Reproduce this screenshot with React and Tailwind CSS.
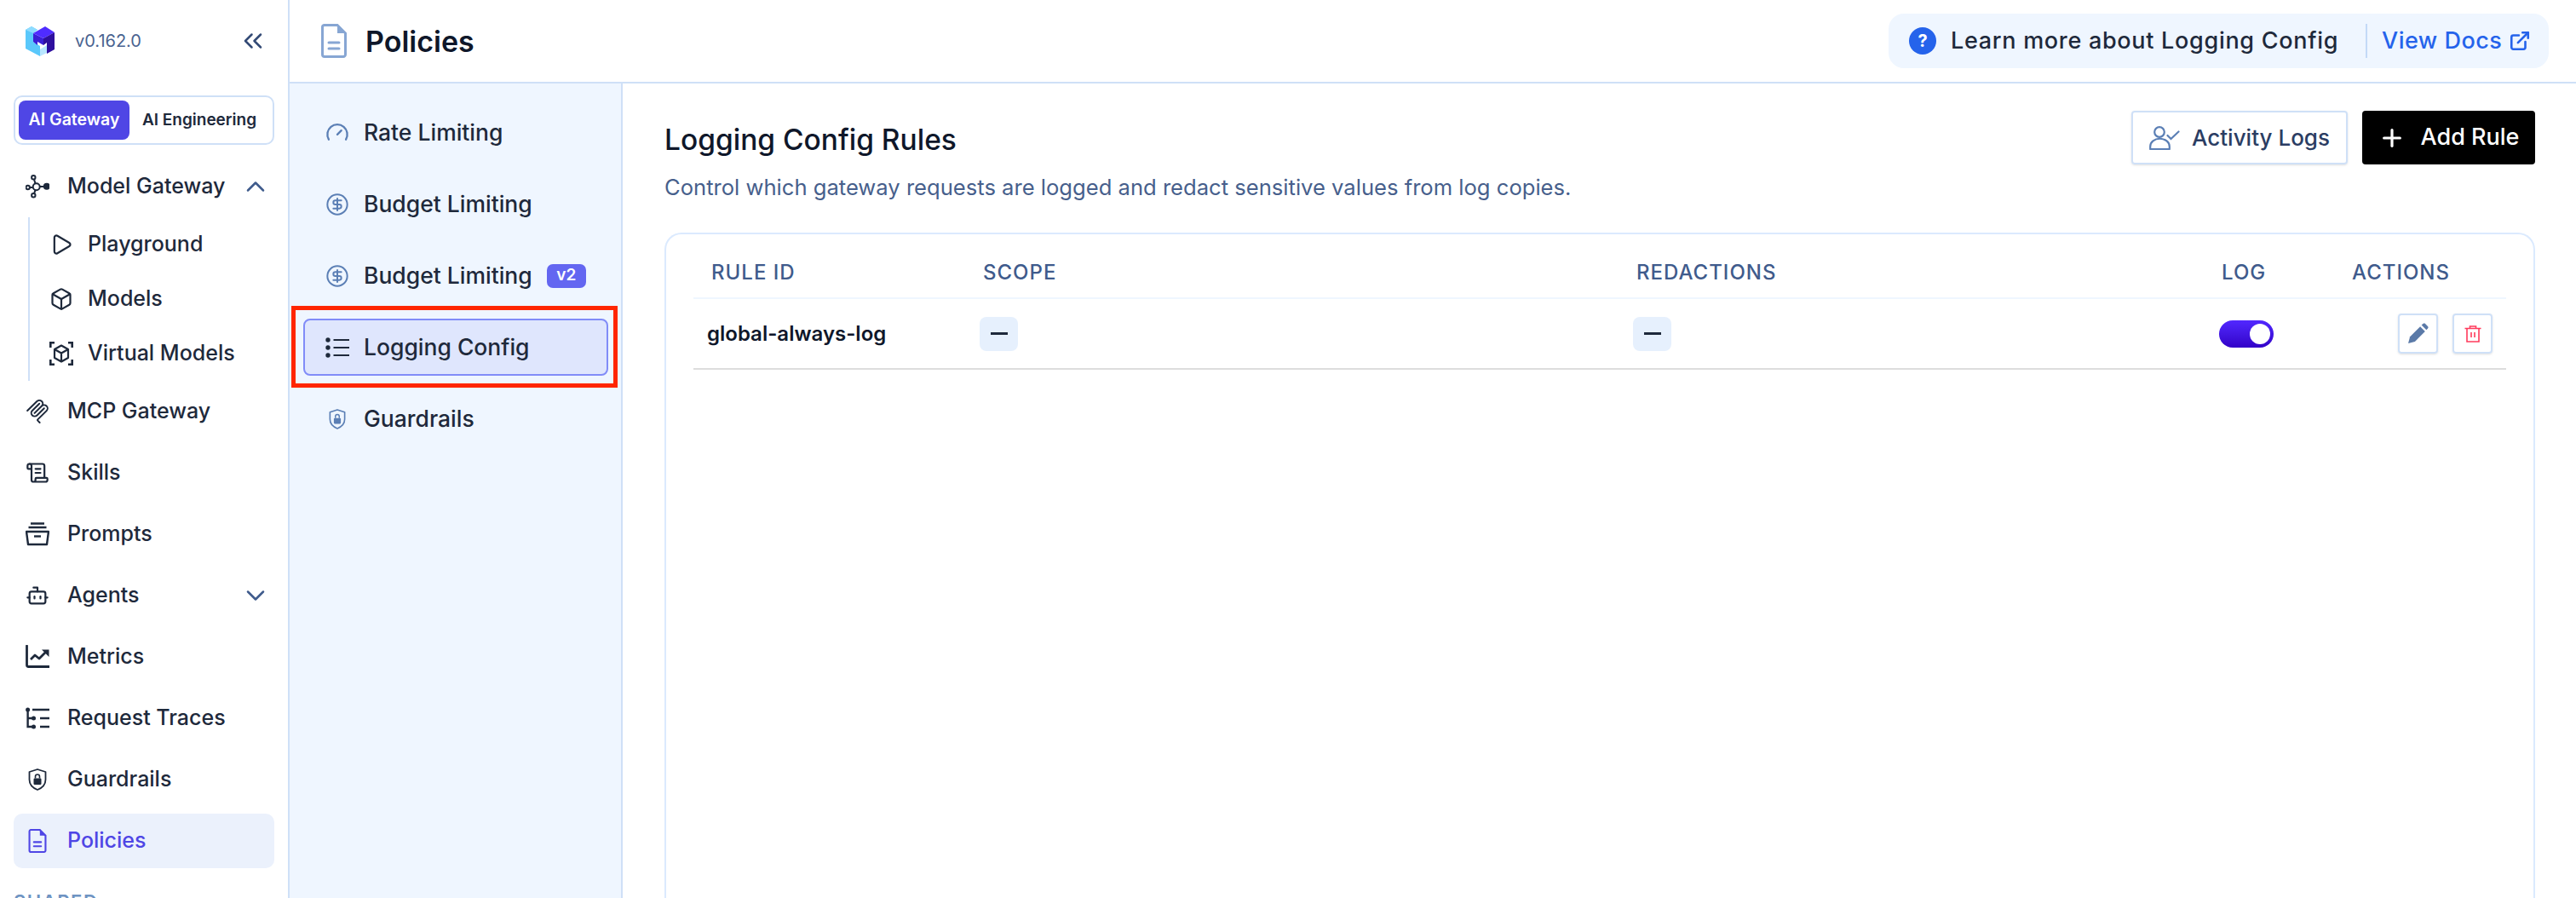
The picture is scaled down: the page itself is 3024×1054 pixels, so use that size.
import {
  ChevronsLeft,
  ChevronUp,
  ChevronDown,
  Play,
  Box,
  ScrollText,
  Bot,
  Gauge,
  CircleDollarSign,
  Plus,
  ExternalLink,
} from "lucide-react";

function Logo() {
  return (
    <svg viewBox="0 0 36 36" className="h-[36px] w-[36px]">
      <path d="M0 5 L7 1 L14 5 L9 9 V19 L17 24 V36 L0 27 Z" fill="#5ac8fb" />
      <path d="M0 5 L7 1 L14 5 L9 9 Z" fill="#8fdcff" />
      <path d="M17 36 L25 32 V23 L17 28 Z" fill="#b8e6ff" />
      <path d="M9 9 L21 15 V23 L14 19 V23 L9 19 Z" fill="#3a1fd6" />
      <path d="M9 9 L23 1 L34 8 L21 15 Z" fill="#4f2cff" />
      <path d="M21 15 L34 8 V28 L25 33 V20 L21 23 Z" fill="#2e0f9e" />
    </svg>
  );
}

function NetworkIcon() {
  return (
    <svg viewBox="0 0 28 28" fill="none" stroke="currentColor" strokeWidth="2" className="h-[28px] w-[28px]">
      <circle cx="12.7" cy="14.3" r="4" />
      <circle cx="9.3" cy="3.3" r="2.2" />
      <circle cx="9.3" cy="24.3" r="2.2" />
      <circle cx="2.7" cy="15" r="2.2" />
      <circle cx="24.8" cy="13.8" r="3" fill="currentColor" />
      <path d="M10 5.5 L11.5 10.4 M10 22.1 L11.5 18.2 M5 15 H8.7 M16.7 14 H22" />
    </svg>
  );
}

function VirtualBoxIcon() {
  return (
    <svg viewBox="0 0 28 28" fill="none" stroke="currentColor" strokeWidth="2.6" className="h-[28px] w-[28px]">
      <path d="M1.3 7 V1.3 H6 M22 1.3 H26.7 V7 M1.3 21 V26.7 H6 M22 26.7 H26.7 V21" />
      <path d="M14 4.5 L22 9 V19 L14 23.5 L6 19 V9 Z M6 9 L14 13.5 L22 9 M14 13.5 V23.5" strokeWidth="2.2" strokeLinejoin="round" />
    </svg>
  );
}

function McpIcon() {
  return (
    <svg viewBox="0 0 24 24" fill="currentColor" className="h-[28px] w-[28px]">
      <path d="M15.688 2.343a2.588 2.588 0 00-3.61 0l-9.626 9.44a.863.863 0 01-1.203 0 .823.823 0 010-1.18l9.626-9.44a4.313 4.313 0 016.016 0 4.116 4.116 0 011.204 3.54 4.3 4.3 0 013.609 1.18l.05.05a4.115 4.115 0 010 5.9l-8.706 8.537a.274.274 0 000 .393l1.788 1.754a.823.823 0 010 1.18.863.863 0 01-1.203 0l-1.788-1.753a1.92 1.92 0 010-2.754l8.706-8.538a2.47 2.47 0 000-3.54l-.05-.049a2.588 2.588 0 00-3.607-.003l-7.172 7.034-.002.002-.098.097a.863.863 0 01-1.204 0 .823.823 0 010-1.18l7.273-7.133a2.47 2.47 0 00-.003-3.537z" />
      <path d="M14.485 4.703a.823.823 0 000-1.18.863.863 0 00-1.204 0l-7.119 6.982a4.115 4.115 0 000 5.9 4.314 4.314 0 006.016 0l7.12-6.982a.823.823 0 000-1.18.863.863 0 00-1.204 0l-7.119 6.982a2.588 2.588 0 01-3.61 0 2.47 2.47 0 010-3.54l7.12-6.982z" />
    </svg>
  );
}

function ArchiveIcon() {
  return (
    <svg viewBox="0 0 28 28" fill="none" stroke="currentColor" strokeWidth="2.4" className="h-[28px] w-[28px]">
      <path d="M6 1.5 H22 M3.5 6 H24.5" />
      <path d="M1 11 H27 L25 26 H3 Z" strokeLinejoin="round" />
      <path d="M10 16.5 H18" />
    </svg>
  );
}

function MetricsIcon() {
  return (
    <svg viewBox="0 0 28 28" fill="none" stroke="currentColor" strokeWidth="2.8" className="h-[28px] w-[28px]">
      <path d="M1.5 1 V23.5 A2 2 0 0 0 3.5 25.5 H28" strokeLinecap="round" />
      <path d="M6 17 L11 12 L16 16 L24 8" strokeLinejoin="round" />
      <path d="M19 5.5 H27.5 V14 Z" fill="currentColor" stroke="none" />
    </svg>
  );
}

function TracesIcon() {
  return (
    <svg viewBox="0 0 28 28" fill="none" stroke="currentColor" strokeWidth="2.4" className="h-[28px] w-[28px]">
      <circle cx="2.6" cy="4" r="2.5" fill="currentColor" stroke="none" />
      <circle cx="9.5" cy="14" r="2.5" fill="currentColor" stroke="none" />
      <circle cx="9.5" cy="24" r="2.5" fill="currentColor" stroke="none" />
      <path d="M2.6 4 V24 H9 M2.6 14 H9 M8 4 H28 M17 14 H28 M17 24 H28" />
    </svg>
  );
}

function ShieldLockIcon({ size = "h-[26px] w-[22px]" }) {
  return (
    <svg viewBox="0 0 22 26" fill="none" className={size}>
      <path d="M11 1 L20.5 4 V13 C20.5 19 16 23 11 25 C6 23 1.5 19 1.5 13 V4 Z" stroke="currentColor" strokeWidth="1.8" strokeLinejoin="round" />
      <rect x="6.5" y="11.5" width="9" height="7.5" rx="1.2" fill="currentColor" />
      <path d="M8.5 11.5 V9.5 A2.5 2.5 0 0 1 13.5 9.5 V11.5" stroke="currentColor" strokeWidth="1.6" />
    </svg>
  );
}

function DocIcon({ className }) {
  return (
    <svg viewBox="0 0 30 40" fill="none" className={className}>
      <path d="M3.5 1.5 H19 L28.5 11 V36 A2.5 2.5 0 0 1 26 38.5 H4 A2.5 2.5 0 0 1 1.5 36 V4 A2.5 2.5 0 0 1 3.5 1.5 Z" stroke="currentColor" strokeWidth="3" />
      <path d="M19 1.5 L28.5 11 H19 Z" fill="currentColor" />
      <path d="M9 22 H21 M9 29 H21" stroke="currentColor" strokeWidth="3" strokeLinecap="round" />
    </svg>
  );
}

function DottedListIcon() {
  return (
    <svg viewBox="0 0 28 24" fill="none" stroke="#1e293b" strokeWidth="2.2" className="h-[24px] w-[28px]">
      <circle cx="3" cy="3" r="2.7" fill="#1e293b" stroke="none" />
      <circle cx="3" cy="12" r="2.7" fill="#1e293b" stroke="none" />
      <circle cx="3" cy="21" r="2.7" fill="#1e293b" stroke="none" />
      <path d="M9.5 3 H28 M9.5 12 H28 M9.5 21 H28" />
    </svg>
  );
}

function ActivityUserIcon() {
  return (
    <svg viewBox="0 0 36 28" fill="none" stroke="#5b7fb5" strokeWidth="2.2" className="h-[28px] w-[36px]">
      <circle cx="12" cy="7" r="5.8" />
      <path d="M1.2 27 V24 A11 9 0 0 1 23.8 24 V27 Z" strokeLinejoin="round" />
      <path d="M21.5 11 L25.5 15 L34.5 6.5" strokeLinecap="round" />
    </svg>
  );
}

function PencilIcon() {
  return (
    <svg viewBox="0 0 24 24" fill="#5b7aa8" className="h-[25px] w-[25px]">
      <path d="M1 23 L3 15.5 L14.5 4 L20 9.5 L8.5 21 Z" />
      <path d="M16 2.5 L18 0.8 C18.6 0.3 19.4 0.3 20 0.8 L23.2 4 C23.7 4.6 23.7 5.4 23.2 6 L21.5 8 Z" />
    </svg>
  );
}

function TrashIcon() {
  return (
    <svg viewBox="0 0 20 20" fill="none" stroke="#ff3b5c" strokeWidth="1.6" className="h-[20px] w-[20px]">
      <path d="M0.5 3.5 H19.5 M6.5 3.5 V1 H13.5 V3.5" />
      <path d="M3 3.5 V19 H17 V3.5" />
      <path d="M8 8 V14 M12 8 V14" />
    </svg>
  );
}

function SideItem({ icon, label, sub, chevron, active }) {
  return (
    <div className={`flex h-[64px] items-center rounded-[10px] ${active ? "bg-[#ebf1fc] text-[#4f46e5]" : "text-[#1e293b]"}`}>
      <span className={`flex w-[28px] shrink-0 items-center justify-center ${sub ? "ml-[42px]" : "ml-[14px]"}`}>{icon}</span>
      <span className={`flex-1 text-[25px] font-medium ${sub ? "ml-[17px]" : "ml-[21px]"}`}>{label}</span>
      {chevron && <span className="mr-[4px] text-[#3f5b8c]">{chevron}</span>}
    </div>
  );
}

function SubNavItem({ icon, label, badge, active }) {
  return (
    <div className={`flex h-[67px] items-center rounded-[8px] border-2 ${active ? "border-[#818cf8] bg-[#dfe6fd]" : "border-transparent"}`}>
      <span className="ml-[24px] flex w-[28px] shrink-0 justify-center text-[#5b7fb5]">{icon}</span>
      <span className="ml-[17px] text-[26.5px] font-medium text-[#1e293b]">{label}</span>
      {badge && (
        <span className="ml-[17px] flex h-[28px] w-[46px] items-center justify-center rounded-[7px] bg-[#6366f1] text-[19px] font-semibold text-white">
          {badge}
        </span>
      )}
    </div>
  );
}

function DashBadge() {
  return (
    <span className="flex h-[40px] w-[45px] items-center justify-center rounded-[8px] bg-[#e6f0fd]">
      <span className="h-[3px] w-[20px] bg-[#1e293b]" />
    </span>
  );
}

export default function App() {
  return (
    <div className="flex h-[1054px] w-[3024px] overflow-hidden bg-white font-['Inter',sans-serif]">
      {/* main sidebar */}
      <aside className="flex h-full w-[340px] shrink-0 flex-col border-r-2 border-[#cfe0f7] px-[16px]">
        <div className="flex h-[96px] shrink-0 items-center pl-[14px]">
          <Logo />
          <span className="ml-[22px] flex-1 text-[20px] text-[#4a6390]">v0.162.0</span>
          <ChevronsLeft className="mr-[7px] h-[36px] w-[36px] text-[#334a75]" strokeWidth={1.7} />
        </div>
        <div className="mt-[16px] flex h-[58px] shrink-0 items-center rounded-[10px] border-2 border-[#cfe0f7] px-[4px]">
          <span className="flex h-[46px] w-[130px] items-center justify-center rounded-[8px] bg-[#4f46e5] text-[19.5px] font-semibold text-white">
            AI Gateway
          </span>
          <span className="flex-1 text-center text-[19px] font-semibold text-[#1e293b]">AI Engineering</span>
        </div>
        <div className="mt-[17px] flex shrink-0 flex-col">
          <SideItem icon={<NetworkIcon />} label="Model Gateway" chevron={<ChevronUp className="h-[36px] w-[36px]" strokeWidth={1.7} />} />
          <div className="ml-[17px] mt-[4px] flex flex-col border-l-2 border-[#cfe0f7]">
            <div className="-ml-[19px]">
              <SideItem sub icon={<Play className="h-[32px] w-[32px]" strokeWidth={1.9} />} label="Playground" />
            </div>
            <div className="-ml-[19px]">
              <SideItem sub icon={<Box className="h-[34px] w-[34px]" strokeWidth={1.9} />} label="Models" />
            </div>
            <div className="-ml-[19px]">
              <SideItem sub icon={<VirtualBoxIcon />} label="Virtual Models" />
            </div>
          </div>
          <div className="mt-[4px] flex flex-col gap-[8px]">
            <SideItem icon={<McpIcon />} label="MCP Gateway" />
            <SideItem icon={<ScrollText className="h-[30px] w-[30px]" strokeWidth={1.9} />} label="Skills" />
            <SideItem icon={<ArchiveIcon />} label="Prompts" />
            <SideItem icon={<Bot className="h-[30px] w-[30px]" strokeWidth={1.9} />} label="Agents" chevron={<ChevronDown className="h-[36px] w-[36px]" strokeWidth={1.7} />} />
            <SideItem icon={<MetricsIcon />} label="Metrics" />
            <SideItem icon={<TracesIcon />} label="Request Traces" />
            <SideItem icon={<ShieldLockIcon />} label="Guardrails" />
            <SideItem active icon={<DocIcon className="h-[28px] w-[22px]" />} label="Policies" />
          </div>
        </div>
        <div className="mt-[27px] shrink-0 text-[22px] font-semibold leading-[24px] tracking-[1.5px] text-[#6e93c2]">SHARED</div>
      </aside>

      <div className="flex min-w-0 flex-1 flex-col">
        {/* top bar */}
        <header className="flex h-[98px] shrink-0 items-center justify-between border-b-2 border-[#cfe0f7] pl-[37px] pr-[32px]">
          <div className="flex items-center gap-[22px]">
            <DocIcon className="h-[40px] w-[30px] text-[#87a6d3]" />
            <h1 className="text-[34px] font-semibold text-[#0f172a]">Policies</h1>
          </div>
          <div className="flex h-[64px] w-[775px] items-center rounded-[18px] bg-[#eff6ff] pl-[24px]">
            <span className="flex h-[32px] w-[32px] items-center justify-center rounded-full bg-[#2563eb] text-[20px] font-bold text-white">?</span>
            <span className="ml-[17px] w-[487px] text-[27px] font-medium tracking-[0.7px] text-[#1e293b]">Learn more about Logging Config</span>
            <span className="h-[40px] w-[2px] bg-[#c3d9f7]" />
            <span className="ml-[17px] text-[27px] font-medium tracking-[0.5px] text-[#2563eb]">View Docs</span>
            <ExternalLink className="ml-[8px] h-[26px] w-[26px] text-[#2563eb]" strokeWidth={2.4} />
          </div>
        </header>

        <div className="flex min-h-0 flex-1">
          {/* policies nav */}
          <nav className="flex w-[391px] shrink-0 flex-col gap-[17px] border-r-2 border-[#cfe0f7] bg-[#eff6ff] pl-[16px] pr-[15px] pt-[24px]">
            <SubNavItem icon={<Gauge className="h-[29px] w-[29px]" strokeWidth={2} />} label="Rate Limiting" />
            <SubNavItem icon={<CircleDollarSign className="h-[32px] w-[32px]" strokeWidth={1.7} />} label="Budget Limiting" />
            <SubNavItem icon={<CircleDollarSign className="h-[32px] w-[32px]" strokeWidth={1.7} />} label="Budget Limiting" badge="v2" />
            <div className="relative">
              <SubNavItem icon={<DottedListIcon />} label="Logging Config" active />
              <div className="absolute -bottom-[14px] -left-[14px] -right-[11px] -top-[15px] border-[5px] border-[#ff2600]" />
            </div>
            <SubNavItem icon={<ShieldLockIcon size="h-[24px] w-[20px]" />} label="Guardrails" />
          </nav>

          {/* rules */}
          <main className="flex min-w-0 flex-1 flex-col pl-[49px] pr-[48px]">
            <div className="flex h-[175px] shrink-0 items-start justify-between pt-[32px]">
              <div>
                <h2 className="mt-[14px] text-[33.5px] font-medium leading-[40px] text-[#0f172a]">Logging Config Rules</h2>
                <p className="mt-[17px] text-[25.6px] text-[#475f8c]">Control which gateway requests are logged and redact sensitive values from log copies.</p>
              </div>
              <div className="flex items-center gap-[17px]">
                <button className="flex h-[63px] w-[254px] items-center justify-center gap-[14px] rounded-[4px] border-2 border-[#cfe0f7] text-[26px] font-medium text-[#2b3d63] shadow-sm">
                  <ActivityUserIcon />
                  Activity Logs
                </button>
                <button className="flex h-[63px] w-[203px] items-center justify-center gap-[18px] rounded-[4px] bg-black text-[27px] font-medium text-white">
                  <Plus className="h-[32px] w-[32px]" strokeWidth={2.4} />
                  Add Rule
                </button>
              </div>
            </div>

            <section className="flex-1 rounded-t-[20px] border-2 border-b-0 border-[#dbeafe] px-[32px]">
              <div className="grid h-[76px] grid-cols-[336px_767px_673px_152px_1fr] items-center border-b-2 border-[#eff6ff] pt-[16px] text-[24px] font-medium tracking-[1px] text-[#3f5b8c]">
                <span className="pl-[21px]">RULE ID</span>
                <span className="pl-[4px]">SCOPE</span>
                <span className="pl-[4px]">REDACTIONS</span>
                <span className="pl-[18px]">LOG</span>
                <span className="pl-[19px]">ACTIONS</span>
              </div>
              <div className="grid h-[83px] grid-cols-[336px_767px_673px_152px_1fr] items-center border-b-2 border-[#dddddd]">
                <span className="pl-[16px] text-[24px] font-semibold text-[#0f172a]">global-always-log</span>
                <DashBadge />
                <DashBadge />
                <span className="ml-[15px] flex h-[32px] w-[64px] items-center justify-end rounded-full bg-gradient-to-b from-[#5227ff] to-[#3300c8] pr-[4px]">
                  <span className="h-[24px] w-[24px] rounded-full bg-white" />
                </span>
                <span className="flex items-center gap-[17px] pl-[73px]">
                  <span className="flex h-[47px] w-[47px] items-center justify-center rounded-[4px] border-2 border-[#cfe0f7] shadow-sm">
                    <PencilIcon />
                  </span>
                  <span className="flex h-[47px] w-[47px] items-center justify-center rounded-[4px] border-2 border-[#cfe0f7] shadow-sm">
                    <TrashIcon />
                  </span>
                </span>
              </div>
            </section>
          </main>
        </div>
      </div>
    </div>
  );
}
